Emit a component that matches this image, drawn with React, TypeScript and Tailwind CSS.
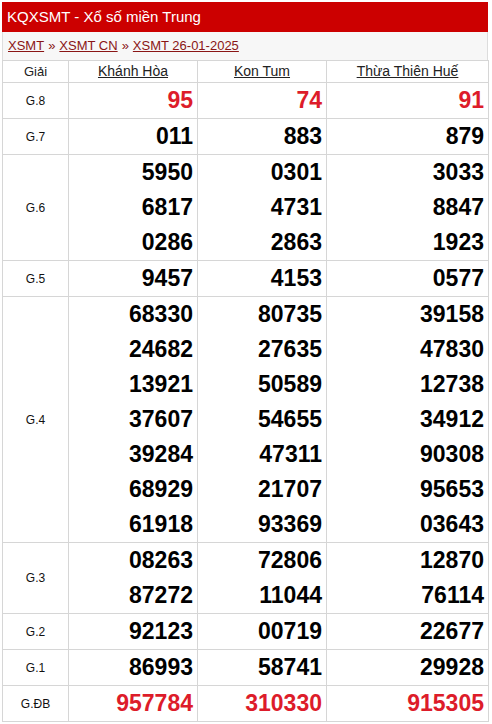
import React from "react";

type Row = { label: string; values: string[][]; red?: boolean };

const rows: Row[] = [
  { label: "G.8", values: [["95"], ["74"], ["91"]], red: true },
  { label: "G.7", values: [["011"], ["883"], ["879"]] },
  {
    label: "G.6",
    values: [
      ["5950", "6817", "0286"],
      ["0301", "4731", "2863"],
      ["3033", "8847", "1923"],
    ],
  },
  { label: "G.5", values: [["9457"], ["4153"], ["0577"]] },
  {
    label: "G.4",
    values: [
      ["68330", "24682", "13921", "37607", "39284", "68929", "61918"],
      ["80735", "27635", "50589", "54655", "47311", "21707", "93369"],
      ["39158", "47830", "12738", "34912", "90308", "95653", "03643"],
    ],
  },
  {
    label: "G.3",
    values: [
      ["08263", "87272"],
      ["72806", "11044"],
      ["12870", "76114"],
    ],
  },
  { label: "G.2", values: [["92123"], ["00719"], ["22677"]] },
  { label: "G.1", values: [["86993"], ["58741"], ["29928"]] },
  { label: "G.ĐB", values: [["957784"], ["310330"], ["915305"]], red: true },
];

export default function App() {
  return (
    <div className="bg-white w-[492px] h-[724px] pt-[2px] pl-[2px]" style={{ fontFamily: '"Liberation Sans", Arial, sans-serif' }}>
      <div className="w-[486px]">
        <div className="h-[30px] bg-[#cc0000] text-white text-[15px] pl-[5px] flex items-center">
          KQXSMT - Xổ số miền Trung
        </div>
        <div className="h-[28px] bg-[#f7f7f7] border-x border-[#dddddd] pl-[5px] flex items-center text-[13px] text-[#8a1515]">
          <a className="underline">XSMT</a>
          <span className="mx-[4px] text-[#8a1515]">»</span>
          <a className="underline">XSMT CN</a>
          <span className="mx-[4px] text-[#8a1515]">»</span>
          <a className="underline">XSMT 26-01-2025</a>
        </div>
        <table className="w-[486px] table-fixed border-collapse">
          <colgroup>
            <col className="w-[66px]" />
            <col className="w-[129px]" />
            <col className="w-[129px]" />
            <col className="w-[162px]" />
          </colgroup>
          <thead>
            <tr className="h-[22px] text-[14px] text-[#222]">
              <th className="border border-[#d6d6d6] font-normal text-[13px]">Giải</th>
              <th className="border border-[#d6d6d6] font-normal"><span className="underline">Khánh Hòa</span></th>
              <th className="border border-[#d6d6d6] font-normal"><span className="underline">Kon Tum</span></th>
              <th className="border border-[#d6d6d6] font-normal"><span className="underline">Thừa Thiên Huế</span></th>
            </tr>
          </thead>
          <tbody>
            {rows.map((r) => (
              <tr key={r.label}>
                <td className="border border-[#d6d6d6] text-center align-middle text-[12px] text-[#111]">{r.label}</td>
                {r.values.map((col, i) => (
                  <td key={i} className="border border-[#d6d6d6] text-right pr-[4px] p-0 align-top">
                    {col.map((v, j) => (
                      <div
                        key={j}
                        className={
                          r.red
                            ? "h-[35px] leading-[35px] text-[23px] font-bold text-[#dd1c2a]"
                            : "h-[35px] leading-[35px] text-[23px] font-bold text-black"
                        }
                      >
                        {v}
                      </div>
                    ))}
                  </td>
                ))}
              </tr>
            ))}
          </tbody>
        </table>
      </div>
    </div>
  );
}
